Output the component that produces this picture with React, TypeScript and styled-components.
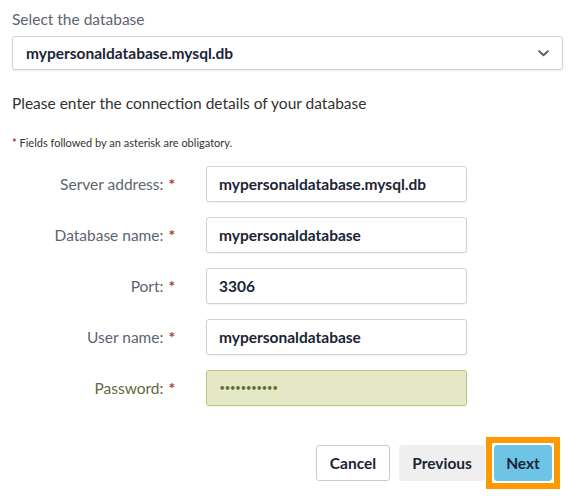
import React from "react";
import styled, { createGlobalStyle } from "styled-components";

const Global = createGlobalStyle`
  html, body { margin: 0; padding: 0; background: #ffffff; }
  body { font-family: Lato, "Open Sans", sans-serif; color: #333; }
  * { box-sizing: border-box; }
`;

const Page = styled.div`
  width: 582px;
  height: 496px;
  padding: 10px 19px 0 12px;
  display: flex;
  flex-direction: column;
`;

const FieldLabel = styled.div`
  font-size: 15.5px;
  color: #5d6470;
  line-height: 18px;
  margin-bottom: 8px;
`;

const SelectBox = styled.div`
  height: 34px;
  width: 551px;
  border: 1px solid #cfd2d6;
  border-radius: 3px;
  box-shadow: 0 1px 2px rgba(0, 0, 0, 0.08);
  display: flex;
  align-items: center;
  justify-content: space-between;
  padding: 0 13px 0 13px;
  font-size: 15.5px;
  font-weight: 700;
  color: #1b2536;
`;

const Intro = styled.div`
  font-size: 15.5px;
  color: #333;
  line-height: 18px;
  margin-top: 24px;
`;

const Note = styled.div`
  font-size: 11px;
  color: #333;
  margin-top: 24px;
  line-height: 13px;
`;

const Star = styled.span`
  color: #a8422c;
  font-weight: 700;
`;

const Form = styled.div`
  display: grid;
  grid-template-columns: 163px 261px;
  column-gap: 31px;
  row-gap: 15px;
  margin-top: 17px;
`;

const RowLabel = styled.label<{ $active?: boolean }>`
  display: flex;
  align-items: center;
  justify-content: flex-end;
  gap: 5px;
  font-size: 15.5px;
  color: ${(p) => (p.$active ? "#62683a" : "#5d6470")};
  height: 36px;
`;

const Input = styled.div<{ $active?: boolean }>`
  height: 36px;
  border: 1px solid ${(p) => (p.$active ? "#bcc67e" : "#cfd2d6")};
  background: ${(p) => (p.$active ? "#e4e8c6" : "#ffffff")};
  border-radius: 3px;
  box-shadow: 0 1px 2px rgba(0, 0, 0, 0.06);
  display: flex;
  align-items: center;
  padding: 0 12px;
  font-size: 15.5px;
  font-weight: 700;
  color: #1b2536;
`;

const Dots = styled.span`
  color: #5e6b24;
  font-size: 10px;
  letter-spacing: -1.1px;
  font-family: "DejaVu Sans", sans-serif;
`;

const Actions = styled.div`
  display: flex;
  justify-content: flex-end;
  align-items: center;
  gap: 9px;
  margin-top: 39px;
  padding-right: 11px;
`;

const Button = styled.button<{ $kind: "outline" | "muted" | "primary"; $w: number }>`
  width: ${(p) => p.$w}px;
  height: 36px;
  padding: 0;
  border-radius: 3px;
  font-family: Lato, "Open Sans", sans-serif;
  font-size: 15.5px;
  font-weight: 700;
  color: #1b2536;
  border: 1px solid
    ${(p) => (p.$kind === "outline" ? "#c9cbcf" : p.$kind === "muted" ? "#efefef" : "#6ec4e4")};
  background: ${(p) => (p.$kind === "outline" ? "#ffffff" : p.$kind === "muted" ? "#efefef" : "#6ec4e4")};
`;

const Highlight = styled.div`
  display: flex;
  border: 6px solid #ff9900;
  padding: 2px;
  margin: -8px;
  background: #ffffff;
`;

const Chevron = () => (
  <svg width="11" height="7" viewBox="0 0 11 7" fill="none">
    <path d="M1.2 1.2 L5.5 5.3 L9.8 1.2" stroke="#5d6470" strokeWidth="2" strokeLinecap="round" strokeLinejoin="round" />
  </svg>
);

const fields = [
  { label: "Server address:", value: "mypersonaldatabase.mysql.db" },
  { label: "Database name:", value: "mypersonaldatabase" },
  { label: "Port:", value: "3306" },
  { label: "User name:", value: "mypersonaldatabase" },
];

export default function App() {
  return (
    <>
      <Global />
      <Page>
        <FieldLabel>Select the database</FieldLabel>
        <SelectBox>
          <span>mypersonaldatabase.mysql.db</span>
          <Chevron />
        </SelectBox>
        <Intro>Please enter the connection details of your database</Intro>
        <Note>
          <Star>*</Star> Fields followed by an asterisk are obligatory.
        </Note>
        <Form>
          {fields.map((f) => (
            <React.Fragment key={f.label}>
              <RowLabel>
                {f.label} <Star>*</Star>
              </RowLabel>
              <Input>{f.value}</Input>
            </React.Fragment>
          ))}
          <RowLabel $active>
            Password: <Star>*</Star>
          </RowLabel>
          <Input $active>
            <Dots>•••••••••••</Dots>
          </Input>
        </Form>
        <Actions>
          <Button $kind="outline" $w={74}>Cancel</Button>
          <Button $kind="muted" $w={86}>Previous</Button>
          <Highlight>
            <Button $kind="primary" $w={58}>Next</Button>
          </Highlight>
        </Actions>
      </Page>
    </>
  );
}
